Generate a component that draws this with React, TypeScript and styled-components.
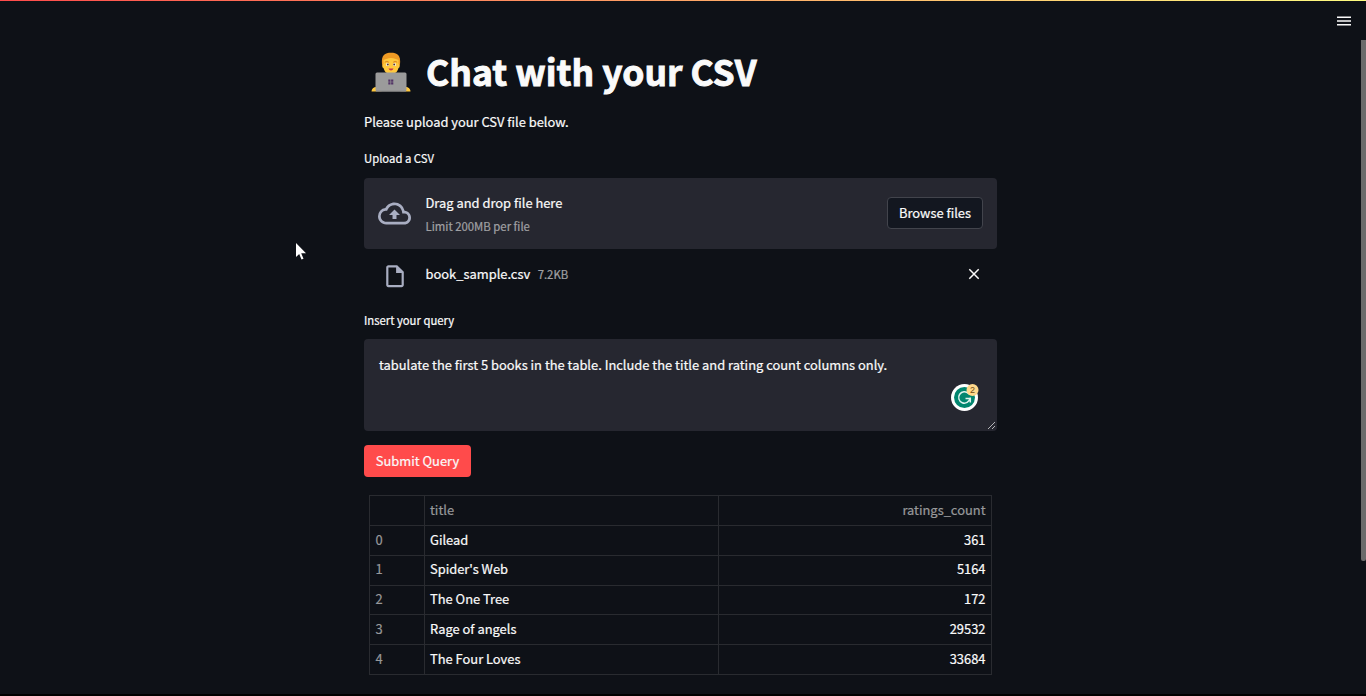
import React from "react";
import styled, { createGlobalStyle } from "styled-components";

const Global = createGlobalStyle`
  * { box-sizing: border-box; }
  html, body { margin: 0; padding: 0; background: #0e1117; overflow: hidden; }
  body, button, textarea {
    font-family: "Noto Sans CJK SC", "Noto Sans", sans-serif;
    font-size: 12.9px;
    color: #fafafa;
    -webkit-text-stroke: 0.22px currentColor;
  }
`;

const Page = styled.div`
  position: relative;
  width: 1366px;
  height: 696px;
  background: #0e1117;
  border-bottom: 2px solid #000;
  overflow: hidden;
`;

const Decoration = styled.div`
  height: 1px;
  background: linear-gradient(90deg, #ff4b4b, #fffd80);
`;

const Toolbar = styled.header`
  display: flex;
  justify-content: flex-end;
  height: 39px;
  padding: 14px 15px 0 0;
`;

const ScrollThumb = styled.div`
  position: absolute;
  top: 40px;
  right: 0;
  width: 5px;
  height: 521px;
  background: #6b6b6b;
  border-radius: 0 0 2px 2px;
`;

const Main = styled.main`
  width: 633px;
  margin-left: 364px;
`;

const Title = styled.h1`
  display: flex;
  align-items: center;
  height: 64px;
  margin: 0;
  font-size: 35.45px;
  font-weight: 700;
  line-height: 62px;
  white-space: nowrap;
  -webkit-text-stroke: 0.9px currentColor;
  span { height: 64px; }
  svg { margin: 0 15px 0 7px; }
`;

const Line = styled.div<{ $h: number; $size?: number }>`
  height: ${(p) => p.$h}px;
  line-height: ${(p) => p.$h}px;
  font-size: ${(p) => p.$size ?? 12.9}px;
  white-space: nowrap;
`;

const Intro = styled(Line)`
  margin-top: 8px;
`;

const Label = styled(Line)<{ $top: number }>`
  margin-top: ${(p) => p.$top}px;
`;

const Dropzone = styled.section`
  display: flex;
  align-items: center;
  height: 71px;
  margin-top: 11px;
  padding: 0 14px;
  background: #262730;
  border-radius: 4px;
`;

const DropText = styled.div`
  flex: 1;
  margin-left: 14.5px;
  padding-bottom: 1px;
`;

const Muted = styled(Line)`
  color: #a0a0a3;
`;

const BrowseButton = styled.button`
  width: 96px;
  height: 32px;
  margin-bottom: 1px;
  padding: 0;
  background: #131720;
  border: 1px solid #42444c;
  border-radius: 4px;
  line-height: 30px;
  white-space: nowrap;
`;

const FileRow = styled.div`
  display: flex;
  align-items: center;
  height: 50px;
  padding: 0 17px 0 21px;
`;

const FileIcon = styled.svg`
  margin-top: 4px;
`;

const FileInfo = styled.div`
  display: flex;
  flex: 1;
  gap: 7.5px;
  margin-left: 20.5px;
`;

const QueryBox = styled.div`
  position: relative;
  height: 92px;
  margin-top: 10px;
  padding: 16px 15px;
  background: #262730;
  border-radius: 4px;
`;

const Assistant = styled.svg`
  position: absolute;
  left: 586px;
  top: 43px;
  text { -webkit-text-stroke: 0.2px #6f4b12; }
`;

const ResizeGrip = styled.svg`
  position: absolute;
  right: 1px;
  bottom: 1px;
`;

const SubmitButton = styled.button`
  display: block;
  width: 107px;
  height: 32px;
  margin-top: 14px;
  padding: 0;
  background: #ff4b4b;
  border: 0;
  border-radius: 4px;
  line-height: 32px;
  white-space: nowrap;
`;

const Grid = styled.div`
  width: 623px;
  margin: 18px 0 0 5px;
  border: 1px solid #292b30;
  border-bottom: 0;
`;

const Row = styled.div<{ $h: number; $line?: number }>`
  display: grid;
  grid-template-columns: 55px 294px 272px;
  height: ${(p) => p.$h}px;
  border-bottom: 1px solid #292b30;
  line-height: ${(p) => p.$line ?? 28}px;
`;

const Cell = styled.div<{ $muted?: boolean; $right?: boolean }>`
  padding: 0 5.5px 0 5px;
  color: ${(p) => (p.$muted ? "#97989a" : "#fafafa")};
  text-align: ${(p) => (p.$right ? "right" : "left")};
  border-right: ${(p) => (p.$right ? "0" : "1px solid #292b30")};
`;

const IndexCell = styled(Cell)`
  padding-left: 5.5px;
`;

const Pointer = styled.svg`
  position: absolute;
  left: 295px;
  top: 242px;
`;

const Technologist = () => (
  <svg width="40" height="40" viewBox="0 0 40 40">
    <path d="M11 12C10 3 14 .7 20 .7s10 2.300 9 11.300l-1 3H12Z" fill="#ee9a24" />
    <path d="M12.500 8c3-1 4-2 7.500-2s4.500 1 7.500 2v4c1.500 0 1.500 4 0 4-1 3-2 4.500-3.500 5h-8c-1.500-.5-2.500-2-3.500-5-1.500 0-1.500-4 0-4Z" fill="#ffc83d" />
    <path d="M13.800 10.200q2-1.500 4 0M22.200 10.200q2-1.500 4 0" stroke="#d67d20" strokeWidth="1" fill="none" />
    <circle cx="16.500" cy="12.500" r="1.500" fill="#fff" />
    <circle cx="23.500" cy="12.500" r="1.500" fill="#fff" />
    <circle cx="16.800" cy="12.500" r="1" fill="#5b3524" />
    <circle cx="23.200" cy="12.500" r="1" fill="#5b3524" />
    <path d="M17.500 16.500h5c-1 2.500-4 2.500-5 0Z" fill="#c8354a" />
    <path d="M5.500 35c-3 0-5 2-5 4.500h10V35ZM34.500 35c3 0 5 2 5 4.500h-10V35Z" fill="#ffc83d" />
    <rect x="4.500" y="20.500" width="31" height="19" rx="1.500" fill="#9b9b9b" />
    <path d="M5 38.800h30v1H5Z" fill="#777" />
    <path d="M17.300 27.500h2.200v2.200h-2.200ZM20.100 27.500h2.200v2.200h-2.200ZM17.300 30.300h2.200v2.200h-2.200ZM20.100 30.300h2.200v2.200h-2.200Z" fill="#533566" />
  </svg>
);

const books: { title: string; count: number; height: number; line: number }[] = [
  { title: "Gilead", count: 361, height: 30, line: 28 },
  { title: "Spider's Web", count: 5164, height: 30, line: 26 },
  { title: "The One Tree", count: 172, height: 29, line: 26 },
  { title: "Rage of angels", count: 29532, height: 30, line: 28 },
  { title: "The Four Loves", count: 33684, height: 30, line: 28 },
];

export default function App() {
  return (
    <Page>
      <Global />
      <Decoration />
      <Toolbar>
        <svg width="14" height="12" viewBox="0 0 14 12">
          <path d="M0 1.400h14v1.600H0ZM0 5.200h14v1.600H0ZM0 9h14v1.600H0Z" fill="#fafafa" />
        </svg>
      </Toolbar>
      <Main>
        <Title>
          <Technologist />
          <span>Chat with your CSV</span>
        </Title>
        <Intro $h={20}>Please upload your CSV file below.</Intro>
        <Label $h={18} $size={11.3} $top={17}>Upload a CSV</Label>
        <Dropzone>
          <svg width="33" height="33" viewBox="0 0 24 24" fill="#a9aec2">
            <path d="M19.350 10.040A7.490 7.490 0 0 0 12 4C9.110 4 6.600 5.640 5.350 8.040A5.994 5.994 0 0 0 0 14c0 3.310 2.690 6 6 6h13c2.760 0 5-2.240 5-5 0-2.640-2.050-4.780-4.650-4.960zM19 18H6c-2.210 0-4-1.790-4-4 0-2.050 1.530-3.760 3.560-3.970l1.070-.11.500-.950A5.469 5.469 0 0 1 12 6c2.620 0 4.880 1.860 5.390 4.430l.3 1.500 1.530.11A2.980 2.980 0 0 1 22 15c0 1.650-1.350 3-3 3zM8 13h2.550v3h2.900v-3H16l-4-4z" />
          </svg>
          <DropText>
            <Line $h={25}>Drag and drop file here</Line>
            <Muted $h={22} $size={11.35}>Limit 200MB per file</Muted>
          </DropText>
          <BrowseButton>Browse files</BrowseButton>
        </Dropzone>
        <FileRow>
          <FileIcon width="20" height="26" viewBox="2 -0.500 20 26" fill="#a9aec2">
            <path d="M14 2H6C4.900 2 4.010 2.900 4.010 4L4 20c0 1.100.890 2 1.990 2H18c1.100 0 2-.9 2-2V8l-6-6zM6 20V4h7v5h5v11H6z" transform="translate(-1.200 -.5) scale(1.100)" />
          </FileIcon>
          <FileInfo>
            <Line $h={20}>book_sample.csv</Line>
            <Muted $h={20} $size={11.35}>7.2KB</Muted>
          </FileInfo>
          <svg width="12" height="12" viewBox="0 0 12 12">
            <path d="M1.300 1.300l9.400 9.400M10.700 1.300l-9.400 9.400" stroke="#fafafa" strokeWidth="1.500" />
          </svg>
        </FileRow>
        <Label $h={18} $size={11.3} $top={12}>Insert your query</Label>
        <QueryBox>
          <Line $h={20}>
            tabulate the first 5 books in the table. Include the title and rating count columns only.
          </Line>
          <Assistant width="30" height="30" viewBox="0 0 30 30">
            <circle cx="14.500" cy="15.500" r="13.500" fill="#fff" />
            <circle cx="14.500" cy="15.500" r="10.500" fill="#02866f" />
            <path d="M18.500 11.500a5.700 5.700 0 1 0 1.500 5h-4.500M20.300 15.500v5" fill="none" stroke="#dff3ef" strokeWidth="1.500" />
            <circle cx="22.500" cy="8" r="6" fill="#ffd98c" />
            <text x="22.500" y="11.200" textAnchor="middle" fontSize="9" fontFamily="Liberation Sans, sans-serif" fill="#6f4b12">2</text>
          </Assistant>
          <ResizeGrip width="9" height="9" viewBox="0 0 9 9">
            <path d="M1 8L8 1M5 8L8 5" stroke="#b5b5b8" strokeWidth="1" />
          </ResizeGrip>
        </QueryBox>
        <SubmitButton>Submit Query</SubmitButton>
        <Grid>
          <Row $h={30}>
            <IndexCell $muted />
            <Cell $muted>title</Cell>
            <Cell $muted $right>ratings_count</Cell>
          </Row>
          {books.map((book, i) => (
            <Row key={book.title} $h={book.height} $line={book.line}>
              <IndexCell $muted>{i}</IndexCell>
              <Cell>{book.title}</Cell>
              <Cell $right>{book.count}</Cell>
            </Row>
          ))}
        </Grid>
      </Main>
      <ScrollThumb />
      <Pointer width="12" height="19" viewBox="0 0 12 19">
        <path d="M1 1v14l3.200-3 2.300 5.500 2-.8-2.300-5.500H11Z" fill="#fff" />
      </Pointer>
    </Page>
  );
}
